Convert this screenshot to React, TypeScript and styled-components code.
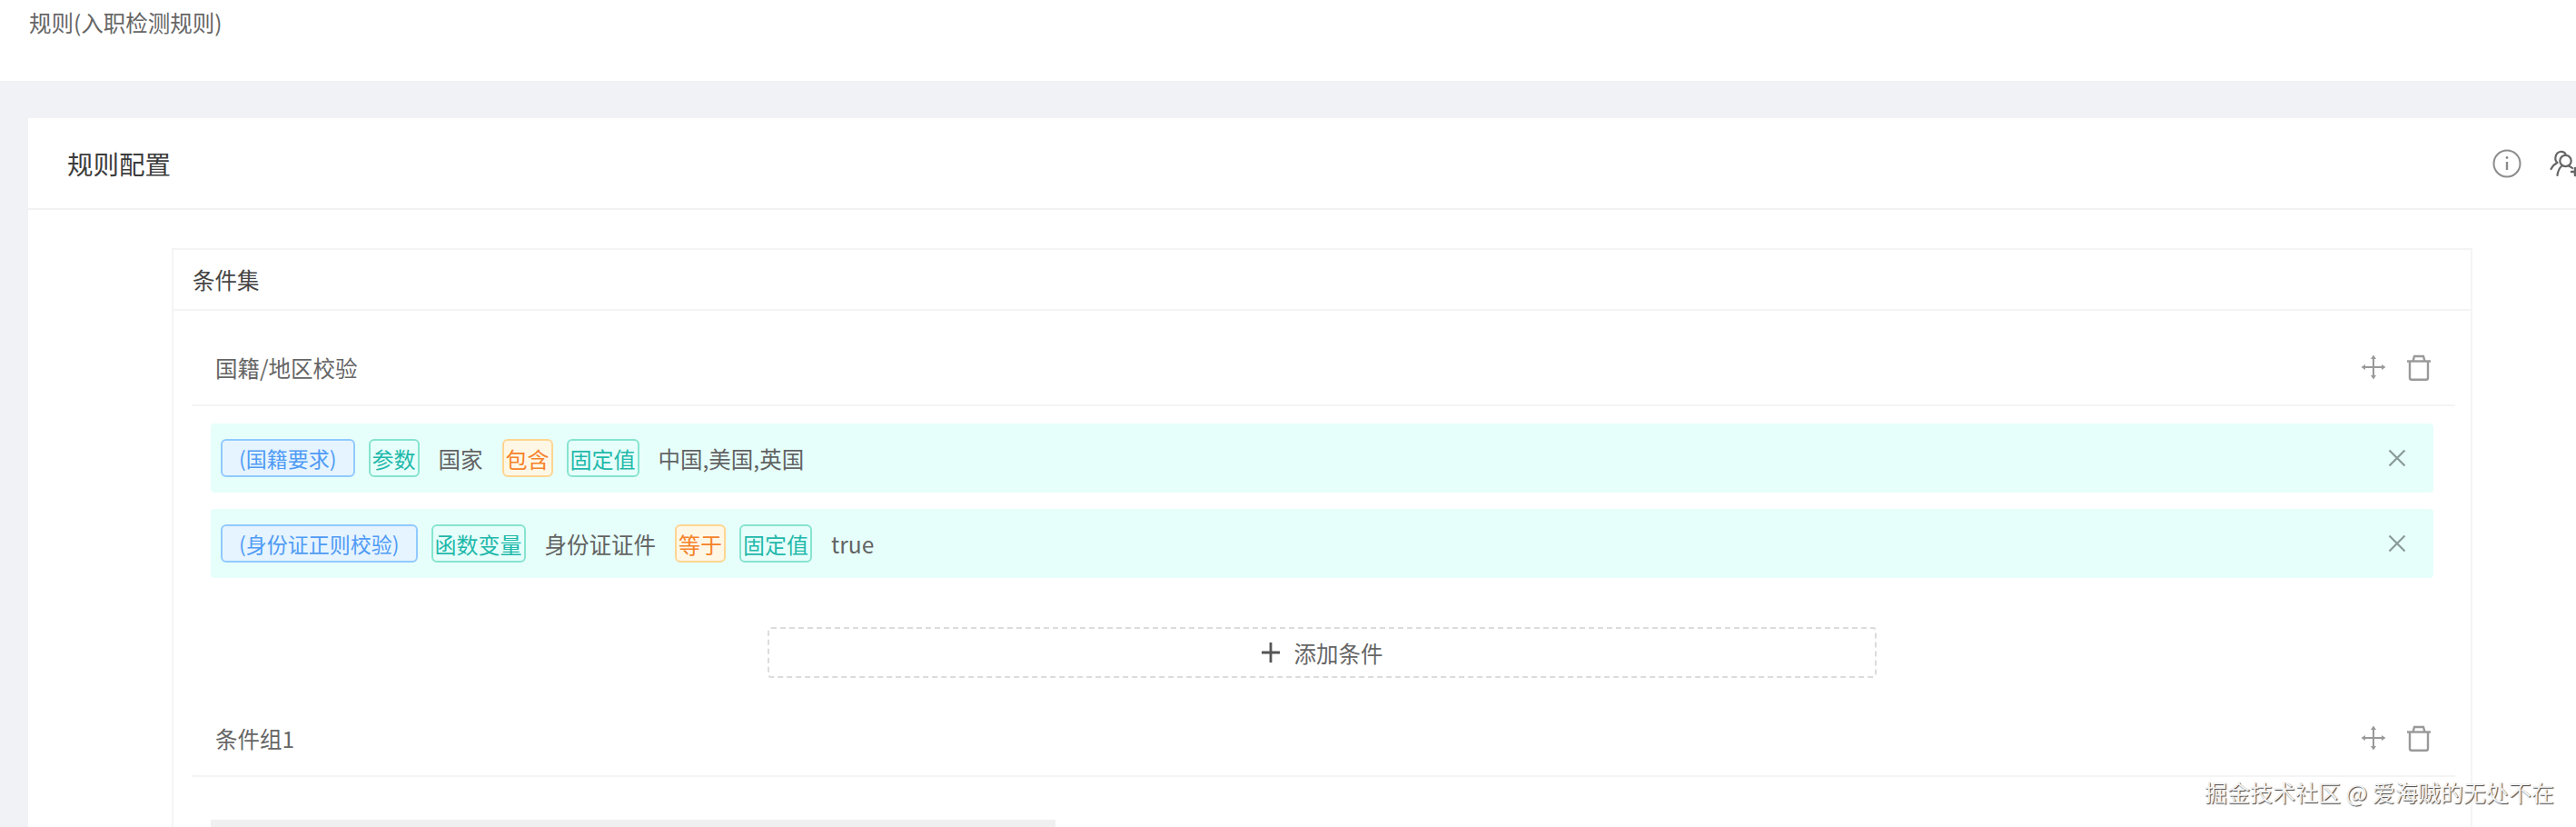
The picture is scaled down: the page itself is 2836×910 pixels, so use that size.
import React from "react";
import styled, { createGlobalStyle } from "styled-components";

const Global = createGlobalStyle`
  html, body { margin: 0; padding: 0; background: #f0f2f5; }
  body { width: 2836px; height: 910px; overflow: hidden; font-family: "Noto Sans CJK SC", "Noto Sans", sans-serif; }
  #root { height: 100%; }
`;

const Page = styled.div`
  position: relative;
  height: 910px;
  overflow: hidden;
  display: flex;
  flex-direction: column;
`;
const TopBar = styled.div`
  height: 89px;
  flex: none;
  background: #fff;
  padding: 9px 0 0 32px;
  box-sizing: border-box;
  font-size: 24.5px;
  line-height: 32px;
  color: #666;
`;
const Card = styled.section`
  margin: 41px 0 0 31px;
  flex: 1;
  background: #fff;
  overflow: hidden;
`;
const CardHeader = styled.header`
  height: 101px;
  box-sizing: border-box;
  border-bottom: 2px solid #f2f2f2;
  padding-left: 43px;
  display: flex;
  align-items: center;
  justify-content: space-between;
  font-size: 28.5px;
  color: #3c3c3c;
`;
const HeaderActions = styled.div`
  display: flex;
  align-items: center;
  gap: 31px;
  margin-right: -5px;
  color: #8c8c8c;
`;
const CardBody = styled.div`
  padding: 42px 0 0 158px;
`;
const SetPanel = styled.div`
  width: 2533px;
  box-sizing: border-box;
  border: 2px solid #f4f4f4;
  border-bottom: none;
  padding-bottom: 40px;
`;
const SetHeader = styled.div`
  height: 67px;
  box-sizing: border-box;
  border-bottom: 2px solid #f4f4f4;
  padding-left: 21px;
  display: flex;
  align-items: center;
  font-size: 24.5px;
  color: #444;
`;
const Group = styled.div`
  margin: 0 17px 0 20px;
`;
const GroupHeader = styled.div`
  height: 105px;
  box-sizing: border-box;
  border-bottom: 2px solid #f4f4f4;
  padding: 21px 26px 0;
  display: flex;
  align-items: center;
  justify-content: space-between;
  font-size: 24.5px;
  color: #666;
`;
const GroupActions = styled.div`
  display: flex;
  align-items: center;
  gap: 22px;
  color: #999;
`;
const Rows = styled.div`
  display: flex;
  flex-direction: column;
  gap: 18px;
  padding: 19px 24px 0 21px;
`;
const Row = styled.div`
  height: 76px;
  box-sizing: border-box;
  background: #e6fffb;
  border-radius: 4px;
  padding: 0 30px 0 11px;
  display: flex;
  align-items: center;
  font-size: 24px;
  color: #636363;
`;
const Conditions = styled.div`
  flex: 1;
  display: flex;
  align-items: center;
  gap: 15px;
`;
const tones = {
  blue: { bg: "#e6f4ff", border: "#91caff", color: "#4f9bf5" },
  teal: { bg: "#e6fffb", border: "#87e4cf", color: "#1fb8aa" },
  orange: { bg: "#fff7e6", border: "#ffd591", color: "#f5822a" },
};
const Tag = styled.span<{ $tone: keyof typeof tones }>`
  height: 42px;
  box-sizing: border-box;
  display: inline-flex;
  align-items: center;
  padding: 0 ${(p) => (p.$tone === "blue" ? "18px" : "2px")};
  border: 2px solid ${(p) => tones[p.$tone].border};
  border-radius: 6px;
  background: ${(p) => tones[p.$tone].bg};
  color: ${(p) => tones[p.$tone].color};
  font-size: ${(p) => (p.$tone === "blue" ? "23px" : "24px")};
  white-space: nowrap;
`;
const Plain = styled.span`
  margin: 0 6px;
  font-size: 24.5px;
  white-space: nowrap;
`;
const IconButton = styled.span`
  display: inline-flex;
  color: #8a9a96;
`;
const AddButton = styled.div`
  width: 1221px;
  height: 56px;
  box-sizing: border-box;
  margin: 54px 0 4px 634px;
  border: 2px dashed #dcdcdc;
  border-radius: 4px;
  display: flex;
  align-items: center;
  justify-content: center;
  gap: 16px;
  font-size: 24.5px;
  color: #666;
`;
const Placeholder = styled.div`
  width: 930px;
  height: 30px;
  margin: 47px 0 0 21px;
  background: #f0f0f0;
`;
const Watermark = styled.div`
  position: absolute;
  left: 2427px;
  top: 854px;
  font-size: 25px;
  line-height: 34px;
  color: #f2f2f2;
  text-shadow: 1px 1px 1px #444;
  white-space: nowrap;
`;

const InfoIcon = () => (
  <svg width="32" height="32" viewBox="0 0 32 32" fill="none" stroke="currentColor" strokeWidth="2">
    <circle cx="16" cy="16" r="14.5" />
    <path d="M16 14v9" strokeWidth="2.4" />
    <circle cx="16" cy="9.5" r="1.4" fill="currentColor" stroke="none" />
  </svg>
);
const UsersIcon = () => (
  <svg width="34" height="30" viewBox="0 0 34 30" fill="none" stroke="#666" strokeWidth="2.2" strokeLinecap="round">
    <path d="M8 13.5C5 11 6 3 11.5 2c3-.5 5 .8 6 2.5" />
    <path d="M8.5 14C5.5 15.5 3 18 1.5 21" />
    <circle cx="17.5" cy="12" r="6.2" />
    <path d="M13.5 17.5C10.5 20 9 23 8.5 28" />
    <path d="M21.5 18c1.5.5 2.5 1 3.5 2" />
    <path d="M24 24h8M28 20v8" strokeWidth="2.6" />
  </svg>
);
const MoveIcon = () => (
  <svg width="28" height="28" viewBox="0 0 28 28" fill="currentColor">
    <path d="M13 3h2v22h-2z" />
    <path d="M3 13h22v2H3z" />
    <path d="M14 .5l3 4.5h-6zM14 27.5L11 23h6zM.5 14L5 11v6zM27.5 14L23 17v-6z" />
  </svg>
);
const TrashIcon = () => (
  <svg width="28" height="29" viewBox="0 0 28 29" fill="none" stroke="currentColor" strokeWidth="2.4">
    <path d="M1 7.5h26" />
    <path d="M7.5 7.5L9 2h10l1.5 5.5" />
    <path d="M4 7.5v18.2c0 1.2.8 2 2 2h16c1.2 0 2-.8 2-2V7.5" />
  </svg>
);
const CloseIcon = () => (
  <svg width="20" height="20" viewBox="0 0 20 20" fill="none" stroke="currentColor" strokeWidth="2.2">
    <path d="M1.5 1.5l17 17M18.5 1.5l-17 17" />
  </svg>
);
const PlusIcon = () => (
  <svg width="20" height="22" viewBox="0 0 20 22" fill="none" stroke="#555" strokeWidth="2.8">
    <path d="M10 0v22M0 11h20" />
  </svg>
);

const Actions = () => (
  <GroupActions>
    <MoveIcon />
    <TrashIcon />
  </GroupActions>
);

export default function App() {
  return (
    <Page>
      <Global />
      <TopBar>规则(入职检测规则)</TopBar>
      <Card>
        <CardHeader>
          规则配置
          <HeaderActions>
            <InfoIcon />
            <UsersIcon />
          </HeaderActions>
        </CardHeader>
        <CardBody>
          <SetPanel>
            <SetHeader>条件集</SetHeader>
            <Group>
              <GroupHeader>
                国籍/地区校验
                <Actions />
              </GroupHeader>
              <Rows>
                <Row>
                  <Conditions>
                    <Tag $tone="blue">(国籍要求)</Tag>
                    <Tag $tone="teal">参数</Tag>
                    <Plain>国家</Plain>
                    <Tag $tone="orange">包含</Tag>
                    <Tag $tone="teal">固定值</Tag>
                    <Plain>中国,美国,英国</Plain>
                  </Conditions>
                  <IconButton><CloseIcon /></IconButton>
                </Row>
                <Row>
                  <Conditions>
                    <Tag $tone="blue">(身份证正则校验)</Tag>
                    <Tag $tone="teal">函数变量</Tag>
                    <Plain>身份证证件</Plain>
                    <Tag $tone="orange">等于</Tag>
                    <Tag $tone="teal">固定值</Tag>
                    <Plain>true</Plain>
                  </Conditions>
                  <IconButton><CloseIcon /></IconButton>
                </Row>
              </Rows>
              <AddButton>
                <PlusIcon />
                添加条件
              </AddButton>
            </Group>
            <Group>
              <GroupHeader>
                条件组1
                <Actions />
              </GroupHeader>
              <Placeholder />
            </Group>
          </SetPanel>
        </CardBody>
      </Card>
      <Watermark>掘金技术社区 @ 爱海贼的无处不在</Watermark>
    </Page>
  );
}
